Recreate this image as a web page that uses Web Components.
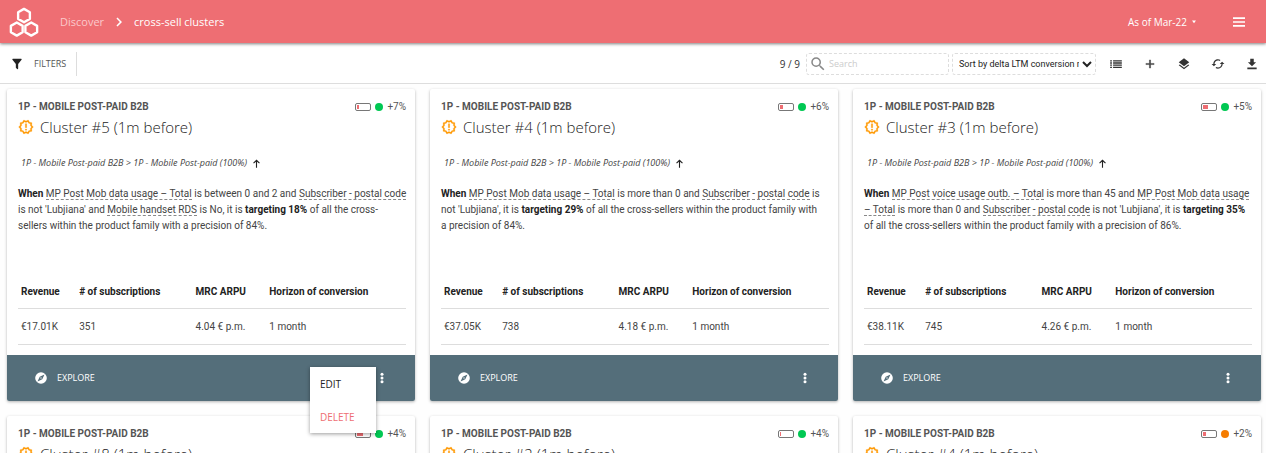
<!DOCTYPE html>
<html lang="en">
<head>
<meta charset="utf-8">
<title>Cross-sell clusters</title>
<style>
  html, body { margin: 0; height: 100%; }
  body { font-family: Roboto, "Open Sans", sans-serif; font-size: 10px; line-height: 16px; color: #444; background: #fff; }
</style>
</head>
<body>
<cluster-app></cluster-app>
<script>
const ICONS = {
  filter: '<path d="M14 12v7.9c0 .9-1 1.5-1.7.8l-2-2a1 1 0 0 1-.3-.8V12L4.200 4.600A1 1 0 0 1 5 3h14a1 1 0 0 1 .8 1.600L14 12z"/>',
  chevron: '<path d="M10 6 8.590 7.410 13.170 12l-4.580 4.590L10 18l6-6z"/>',
  caret: '<path d="M4 6h16l-8 11z"/>',
  menu: '<path d="M3 19h18v-2.500H3V19zm0-5.700h18v-2.600H3v2.600zM3 5v2.500h18V5H3z"/>',
  search: '<path d="M15.500 14h-.79l-.28-.27A6.471 6.471 0 0 0 16 9.500 6.500 6.500 0 1 0 9.500 16c1.610 0 3.090-.59 4.230-1.570l.27.28v.79l5 4.990L20.490 19l-4.990-5zm-6 0C7.010 14 5 11.990 5 9.500S7.010 5 9.500 5 14 7.010 14 9.500 11.990 14 9.500 14z"/>',
  list: '<path d="M2 5.500h3v2.200H2zM2 9.200h3v2.200H2zM2 12.900h3v2.200H2zM2 16.600h3v2.200H2zM7 5.500h15v2.200H7zM7 9.200h15v2.200H7zM7 12.900h15v2.200H7zM7 16.600h15v2.200H7z"/>',
  plus: '<path d="M19 13h-6v6h-2v-6H5v-2h6V5h2v6h6v2z" stroke="currentColor" stroke-width=".6"/>',
  layers: '<path d="m12 18.540-7.370-5.730L3 14.070l9 7 9-7-1.630-1.270L12 18.540zM12 16l7.360-5.730L21 9l-9-7-9 7 1.630 1.270L12 16z"/>',
  cached: '<path d="m19 8-4 4h3c0 3.310-2.690 6-6 6-1.010 0-1.970-.25-2.800-.7l-1.460 1.460C8.970 19.540 10.430 20 12 20c4.420 0 8-3.580 8-8h3l-4-4zM6 12c0-3.310 2.690-6 6-6 1.010 0 1.970.25 2.800.7l1.460-1.460C15.030 4.460 13.570 4 12 4c-4.420 0-8 3.580-8 8H1l4 4 4-4H6z"/>',
  download: '<path d="M19 9h-4V3H9v6H5l7 7 7-7zM4 18v3h16v-3z"/>',
  up: '<path d="M10.800 21V8L6.300 12.200 4.700 10.600 12 3l7.300 7.600-1.600 1.600L13.200 8v13z"/>',
  compass: '<path d="M12 10.900a1.100 1.100 0 1 0 0 2.200 1.100 1.100 0 0 0 0-2.200zM12 2a10 10 0 1 0 0 20 10 10 0 0 0 0-20zm2.190 12.190L6 18l3.810-8.190L18 6l-3.810 8.190z"/>',
  dots: '<circle cx="12" cy="4.500" r="3"/><circle cx="12" cy="12" r="3"/><circle cx="12" cy="19.500" r="3"/>',
  alert: '<path d="M23 12l-2.440-2.780.34-3.680-3.610-.82-1.890-3.180L12 3 8.600 1.540 6.710 4.720l-3.610.81.34 3.680L1 12l2.440 2.780-.34 3.690 3.610.82 1.890 3.180L12 21l3.400 1.460 1.890-3.180 3.610-.82-.34-3.680L23 12zm-4.510 2.110.26 2.790-2.740.62-1.430 2.410L12 18.820l-2.580 1.110-1.430-2.410-2.740-.62.26-2.800L3.660 12l1.850-2.120-.26-2.780 2.740-.61 1.430-2.410L12 5.180l2.580-1.110 1.430 2.410 2.740.62-.26 2.790L20.340 12l-1.850 2.110zM11 15h2v2h-2zM11 7h2v6h-2z" stroke="currentColor" stroke-width=".4"/>',
  logo: '<g fill="none" stroke="currentColor" stroke-width="1.900" stroke-linejoin="round"><path d="M12 1.500l4.700 2.700v5.300L12 12.200 7.300 9.500V4.200z"/><path d="M6.200 12.400l4.700 2.700v5.100l-4.700 2.700-4.700-2.700v-5.100z"/><path d="M17.800 12.400l4.700 2.700v5.100l-4.700 2.700-4.700-2.700v-5.100z"/></g>'
};

class UiIcon extends HTMLElement {
  connectedCallback() {
    this.attachShadow({ mode: 'open' }).innerHTML = `
      <style>
        :host { display: inline-flex; flex: none; width: 14px; height: 14px; }
        svg { width: 100%; height: 100%; fill: currentColor; }
      </style>
      <svg viewBox="0 0 24 24" aria-hidden="true">${ICONS[this.getAttribute('name')]}</svg>`;
  }
}
customElements.define('ui-icon', UiIcon);

class AppHeader extends HTMLElement {
  connectedCallback() {
    this.attachShadow({ mode: 'open' }).innerHTML = `
      <style>
        :host { display: flex; flex: none; align-items: center; height: 43px; padding: 0 19px 0 9px; box-sizing: border-box;
          background: #ee6e73; color: #fff; box-shadow: 0 1px 3px rgba(0,0,0,.5); position: relative; z-index: 2;
          font-family: "Open Sans", sans-serif; font-size: 11px; }
        nav { display: flex; align-items: center; margin-left: 21px; flex: 1; }
        nav ui-icon { width: 18px; height: 18px; margin: 0 6px; }
        a { color: #fff; text-decoration: none; }
        a.parent { color: #fbc9cb; }
        button { border: 0; background: none; color: inherit; font: inherit; padding: 0; display: flex; align-items: center; }
        .logo { width: 30px; height: 30px; }
        .date { font-size: 10px; }
        .date ui-icon { width: 6px; height: 6px; margin-left: 4px; }
        .menu { margin-left: 34px; }
        .menu ui-icon { width: 16px; height: 16px; }
      </style>
      <ui-icon class="logo" name="logo"></ui-icon>
      <nav aria-label="Breadcrumb"><a class="parent" href="#">Discover</a><ui-icon name="chevron"></ui-icon><a href="#">cross-sell clusters</a></nav>
      <button class="date">As of Mar-22<ui-icon name="caret"></ui-icon></button>
      <button class="menu" aria-label="Menu"><ui-icon name="menu"></ui-icon></button>`;
  }
}
customElements.define('app-header', AppHeader);

class ToolBar extends HTMLElement {
  connectedCallback() {
    this.attachShadow({ mode: 'open' }).innerHTML = `
      <style>
        :host { display: flex; flex: none; align-items: center; height: 41px; padding: 2px 7px 0 0; box-sizing: border-box; border-bottom: 1px solid #ddd; color: #333;
          font-family: "Open Sans", sans-serif; }
        button { border: 0; background: none; color: inherit; font: inherit; padding: 0; display: flex; align-items: center; }
        .filters { height: 24px; padding: 0 10px; border-right: 1px solid #ddd; gap: 10px; color: #555; font-size: 9px; }
        .filters ui-icon { color: #222; }
        .count { margin-left: auto; margin-right: 6px; }
        label { display: flex; align-items: center; width: 143px; height: 22px; box-sizing: border-box; padding: 0 2px; gap: 2px;
          border: 1px dashed #ddd; border-radius: 3px; color: #888; }
        label ui-icon { width: 18px; height: 18px; }
        input { border: 0; outline: 0; padding: 0; min-width: 0; flex: 1; font: inherit; font-size: 9px; background: none; }
        input::placeholder { color: #ccc; }
        select { width: 144px; height: 22px; margin-left: 3px; padding: 0 0 0 2px; border: 1px dashed #ddd; border-radius: 3px;
          background: #fff; color: #222; font: inherit; font-family: Roboto, sans-serif; font-size: 9px; }
        .actions { display: flex; gap: 20px; margin-left: 13px; }
      </style>
      <button class="filters"><ui-icon name="filter"></ui-icon>FILTERS</button>
      <span class="count">9 / 9</span>
      <label><ui-icon name="search"></ui-icon><input type="text" placeholder="Search" aria-label="Search"></label>
      <select aria-label="Sort order"><option>Sort by delta LTM conversion rate</option></select>
      <div class="actions">
        <button aria-label="List"><ui-icon name="list"></ui-icon></button>
        <button aria-label="Add"><ui-icon name="plus"></ui-icon></button>
        <button aria-label="Layers"><ui-icon name="layers"></ui-icon></button>
        <button aria-label="Refresh"><ui-icon name="cached"></ui-icon></button>
        <button aria-label="Download"><ui-icon name="download"></ui-icon></button>
      </div>`;
  }
}
customElements.define('tool-bar', ToolBar);

class ScoreBadge extends HTMLElement {
  connectedCallback() {
    this.attachShadow({ mode: 'open' }).innerHTML = `
      <style>
        :host { display: flex; align-items: center; gap: 4px; color: #555; }
        .battery { display: flex; width: 16px; height: 8px; box-sizing: border-box; border: 1px solid #777; border-radius: 2px; padding: 1px; }
        .battery i { width: ${this.getAttribute('level')}%; background: #ee6e73; }
        .dot { width: 8px; height: 8px; border-radius: 50%; background: ${this.getAttribute('tone') || '#00c853'}; }
      </style>
      <span class="battery"><i></i></span><span class="dot"></span><span><slot></slot></span>`;
  }
}
customElements.define('score-badge', ScoreBadge);

class KpiTable extends HTMLElement {
  connectedCallback() {
    const cells = this.getAttribute('values').split('|').map(v => `<td>${v}</td>`).join('');
    this.attachShadow({ mode: 'open' }).innerHTML = `
      <style>
        :host { display: block; }
        table { width: 100%; table-layout: fixed; border-collapse: collapse; }
        th, td { height: 34px; padding: 2px 0 0 3px; box-sizing: border-box; text-align: left; border-bottom: 1px solid #ddd; white-space: nowrap; }
        td { height: 36px; }
        th { color: #222; font-weight: 700; }
      </style>
      <table>
        <colgroup><col style="width:15%"><col style="width:30%"><col style="width:19%"><col></colgroup>
        <thead><tr><th>Revenue</th><th># of subscriptions</th><th>MRC ARPU</th><th>Horizon of conversion</th></tr></thead>
        <tbody><tr>${cells}</tr></tbody>
      </table>`;
  }
}
customElements.define('kpi-table', KpiTable);

class ActionMenu extends HTMLElement {
  connectedCallback() {
    this.attachShadow({ mode: 'open' }).innerHTML = `
      <style>
        :host { display: flex; flex-direction: column; width: 66px; background: #fff; box-shadow: 0 1px 4px rgba(0,0,0,.4); font-size: 10px; }
        button { height: 33px; border: 0; background: none; padding: 0 10px; text-align: left; font: inherit; color: #222; }
        .danger { color: #ee6e73; }
      </style>
      <button>EDIT</button><button class="danger">DELETE</button>`;
  }
}
customElements.define('action-menu', ActionMenu);

class ClusterCard extends HTMLElement {
  connectedCallback() {
    const a = n => this.getAttribute(n);
    this.attachShadow({ mode: 'open' }).innerHTML = `
      <style>
        :host { display: flex; flex-direction: column; min-height: 312px; min-width: 0; background: #fff; border-radius: 2px;
          box-shadow: 0 1px 3px rgba(0,0,0,.3); }
        .body { flex: 1; padding: 10px 9px 0 11px; }
        header { display: flex; justify-content: space-between; align-items: center; }
        header b { color: #555; }
        h2 { display: flex; align-items: center; gap: 6px; margin: 0; font-family: "Open Sans", sans-serif; font-size: 15px; line-height: 24px; font-weight: 300; color: #222; }
        h2 ui-icon { width: 16px; height: 16px; color: #ff9800; }
        .path { display: flex; align-items: center; margin: 16px 3px 14px; gap: 4px; font-family: "Open Sans", sans-serif; font-size: 9px; font-style: italic; }
        .path ui-icon { width: 11px; height: 11px; color: #222; }
        .rule { margin: 0 -4px 0 0; padding-top: 1px; min-height: 88px; }
        ::slotted(u) { text-decoration: none; border-bottom: 1px dashed #888; }
        ::slotted(b) { color: #222; }
        footer { display: flex; align-items: center; justify-content: space-between; height: 46px; margin-top: 10px; padding: 0 27px;
          background: #546e7a; color: #fff; border-radius: 0 0 2px 2px; font-family: "Open Sans", sans-serif; position: relative; }
        footer button { display: flex; align-items: center; gap: 9px; border: 0; padding: 0; background: none; color: inherit; font: inherit; font-size: 9px; }
        footer .more ui-icon { width: 12px; height: 12px; }
        action-menu { position: absolute; right: 39px; top: 12px; z-index: 5; }
      </style>
      <div class="body">
        <header><b>1P - MOBILE POST-PAID B2B</b><score-badge level="${a('level')}" tone="${a('tone') || ''}">${a('score')}</score-badge></header>
        <h2><ui-icon name="alert"></ui-icon>${a('name')}</h2>
        ${a('values') ? `<div class="path">1P - Mobile Post-paid B2B &gt; 1P - Mobile Post-paid (100%)<ui-icon name="up"></ui-icon></div>
        <p class="rule"><slot></slot></p>
        <kpi-table values="${a('values')}"></kpi-table>` : ''}
      </div>
      <footer>
        <button><ui-icon name="compass"></ui-icon>EXPLORE</button>
        <button class="more" aria-label="More actions"><ui-icon name="dots"></ui-icon></button>
        ${this.hasAttribute('open') ? '<action-menu></action-menu>' : ''}
      </footer>`;
  }
}
customElements.define('cluster-card', ClusterCard);

class ClusterApp extends HTMLElement {
  connectedCallback() {
    this.attachShadow({ mode: 'open' }).innerHTML = `
      <style>
        :host { display: flex; flex-direction: column; height: 100vh; }
        main { flex: 1; min-height: 0; overflow: auto; scrollbar-width: none; display: grid; grid-template-columns: repeat(3, minmax(0, 1fr));
          align-content: start; gap: 15px; padding: 5px 5px 15px 7px; background: #fefefe; }
      </style>
      <app-header></app-header>
      <tool-bar></tool-bar>
      <main>
        <cluster-card open name="Cluster #5 (1m before)" score="+7%" level="12" values="€17.01K|351|4.04 € p.m.|1 month"><b>When</b> <u>MP Post Mob data usage – Total</u> is between 0 and 2 and <u>Subscriber - postal code</u> is not 'Lubjiana' and <u>Mobile handset RDS</u> is No, it is <b>targeting 18%</b> of all the cross-sellers&nbsp;within the product family with a precision of 84%.</cluster-card>
        <cluster-card name="Cluster #4 (1m before)" score="+6%" level="25" values="€37.05K|738|4.18 € p.m.|1 month"><b>When</b> <u>MP Post Mob data usage – Total</u> is more than 0 and <u>Subscriber - postal code</u> is not 'Lubjiana', it is <b>targeting 29%</b> of all the cross-sellers within the product family with a&nbsp;precision of 84%.</cluster-card>
        <cluster-card name="Cluster #3 (1m before)" score="+5%" level="35" values="€38.11K|745|4.26 € p.m.|1 month"><b>When</b> <u>MP Post voice usage outb. – Total</u> is more than 45 and <u>MP Post Mob data usage – Total</u> is more than 0 and <u>Subscriber - postal code</u> is not 'Lubjiana', it is <b>targeting 35%</b> of&nbsp;all the cross-sellers within the product family with a precision of 86%.</cluster-card>
        <cluster-card name="Cluster #8 (1m before)" score="+4%" level="50"></cluster-card>
        <cluster-card name="Cluster #2 (1m before)" score="+4%" level="4"></cluster-card>
        <cluster-card name="Cluster #4 (1m before)" score="+2%" level="20" tone="#f57c00"></cluster-card>
      </main>`;
  }
}
customElements.define('cluster-app', ClusterApp);
</script>
</body>
</html>
